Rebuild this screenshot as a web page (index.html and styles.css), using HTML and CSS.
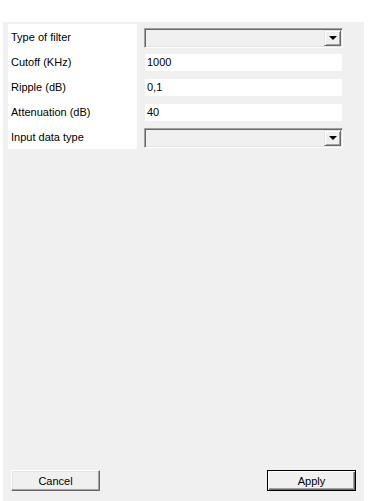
FILE: index.html
```html
<!DOCTYPE html>
<html lang="en">
  <head>
    <meta charset="UTF-8" />
    <meta name="viewport" content="width=device-width, initial-scale=1.0" />
    <title>Filter Settings</title>
    <link rel="stylesheet" href="styles.css">
  </head>
  <body>
    <div class="panel">
      <form class="settings" id="filter-form">
        <div class="labels">
          <label for="filter-type">Type of filter</label>
          <label for="cutoff">Cutoff (KHz)</label>
          <label for="ripple">Ripple (dB)</label>
          <label for="attenuation">Attenuation (dB)</label>
          <label for="data-type">Input data type</label>
        </div>
        <div class="fields">
          <div class="row">
            <div class="combo" id="filter-type">
              <span class="combo-value"></span>
              <span class="combo-button"><span class="arrow"></span></span>
            </div>
          </div>
          <div class="row">
            <input type="text" id="cutoff" value="1000" />
          </div>
          <div class="row">
            <input type="text" id="ripple" value="0,1" />
          </div>
          <div class="row">
            <input type="text" id="attenuation" value="40" />
          </div>
          <div class="row">
            <div class="combo" id="data-type">
              <span class="combo-value"></span>
              <span class="combo-button"><span class="arrow"></span></span>
            </div>
          </div>
        </div>
      </form>
      <div class="actions">
        <button type="button" class="btn">Cancel</button>
        <button type="button" class="btn btn-default">Apply</button>
      </div>
    </div>
  </body>
</html>
```

FILE: styles.css
```css
body {
  margin: 0;
  padding: 22px 4px 0 3px;
  background: #fff;
  font-family: Tahoma, "Liberation Sans", Arial, sans-serif;
  font-size: 11px;
  color: #000;
}
.panel {
  width: 361px;
  height: 479px;
  background: #f0f0f0;
  display: flex;
  flex-direction: column;
  justify-content: space-between;
}
.settings {
  display: flex;
  gap: 7px;
  padding: 2px 0 0 5px;
  margin: 0;
}
.labels {
  width: 129px;
  height: 125px;
  background: #fff;
  display: flex;
  flex-direction: column;
}
.labels label {
  height: 25px;
  line-height: 26px;
  padding-left: 3px;
}
.fields {
  width: 199px;
  display: flex;
  flex-direction: column;
}
.row {
  height: 25px;
  display: flex;
  align-items: center;
}
.row input {
  box-sizing: border-box;
  width: 197px;
  height: 17px;
  margin: 1px 1px 0;
  padding: 0 2px;
  border: none;
  outline: none;
  background: #fff;
  font: inherit;
  color: #000;
}
.combo {
  box-sizing: border-box;
  width: 199px;
  height: 20px;
  margin-top: 2px;
  display: flex;
  justify-content: space-between;
  background: #f0f0f0;
  border-style: solid;
  border-width: 1px;
  border-color: #a0a0a0 #fff #fff #a0a0a0;
  box-shadow: inset 1px 1px 0 #696969, inset -1px -1px 0 #e3e3e3;
}
.combo-button {
  box-sizing: border-box;
  width: 17px;
  height: 16px;
  margin: 1px 1px 0 0;
  background: #f0f0f0;
  border-style: solid;
  border-width: 1px;
  border-color: #e3e3e3 #696969 #696969 #e3e3e3;
  box-shadow: inset 1px 1px 0 #fff, inset -1px -1px 0 #a0a0a0;
  display: flex;
  align-items: center;
  justify-content: center;
}
.arrow {
  width: 0;
  height: 0;
  border-left: 4px solid transparent;
  border-right: 4px solid transparent;
  border-top: 4px solid #000;
  margin-top: 1px;
}
.actions {
  display: flex;
  justify-content: space-between;
  padding: 0 8px 10px 8px;
}
.btn {
  box-sizing: border-box;
  width: 89px;
  height: 21px;
  padding: 0;
  font: inherit;
  color: #000;
  background: #f0f0f0;
  border-style: solid;
  border-width: 1px;
  border-color: #fff #696969 #696969 #fff;
  box-shadow: inset -1px -1px 0 #a0a0a0, inset 1px 1px 0 #e3e3e3;
}
.btn-default {
  border-color: #000;
  box-shadow: inset 1px 1px 0 #fff, inset -1px -1px 0 #696969, inset -2px -2px 0 #a0a0a0;
}
```
